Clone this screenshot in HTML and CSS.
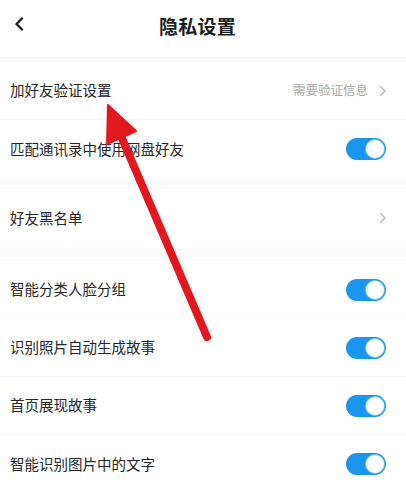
FILE: index.html
```html
<!DOCTYPE html>
<html lang="zh-CN">
<head>
<meta charset="utf-8">
<title>隐私设置</title>
<link rel="stylesheet" href="styles.css">
</head>
<body>
<div class="page">
  <header class="topbar">
    <span class="back">
      <svg width="12" height="14" viewBox="0 0 12 14"><path d="M9 1.5 L3.5 7 L9 12.5" fill="none" stroke="#222" stroke-width="2.4" stroke-linecap="round" stroke-linejoin="round"/></svg>
    </span>
    <h1 class="title">隐私设置</h1>
  </header>
  <div class="band band-top"></div>

  <section class="group">
    <div class="row">
      <span class="label">加好友验证设置</span>
      <span class="extra">需要验证信息<svg class="chev" width="8" height="12" viewBox="0 0 8 12"><path d="M1.5 1.5 L6 6 L1.5 10.5" fill="none" stroke="#b8b8b8" stroke-width="1.4" stroke-linecap="round" stroke-linejoin="round"/></svg></span>
    </div>
    <div class="row">
      <span class="label">匹配通讯录中使用网盘好友</span>
      <span class="toggle"><span class="thumb"></span></span>
    </div>
  </section>
  <div class="band band-mid"></div>

  <section class="group">
    <div class="row">
      <span class="label">好友黑名单</span>
      <span class="extra"><svg class="chev" width="8" height="12" viewBox="0 0 8 12"><path d="M1.5 1.5 L6 6 L1.5 10.5" fill="none" stroke="#b8b8b8" stroke-width="1.4" stroke-linecap="round" stroke-linejoin="round"/></svg></span>
    </div>
  </section>
  <div class="band band-low"></div>

  <section class="group">
    <div class="row">
      <span class="label">智能分类人脸分组</span>
      <span class="toggle"><span class="thumb"></span></span>
    </div>
    <div class="row">
      <span class="label">识别照片自动生成故事</span>
      <span class="toggle"><span class="thumb"></span></span>
    </div>
    <div class="row">
      <span class="label">首页展现故事</span>
      <span class="toggle"><span class="thumb"></span></span>
    </div>
    <div class="row">
      <span class="label">智能识别图片中的文字</span>
      <span class="toggle"><span class="thumb"></span></span>
    </div>
  </section>

  <svg class="arrow" width="406" height="498" viewBox="0 0 406 498">
    <line x1="207" y1="337" x2="121" y2="136" stroke="#e3171e" stroke-width="8" stroke-linecap="round"/>
    <polygon points="108,105 136,131 107,144" fill="#e3171e" stroke="#e3171e" stroke-width="2" stroke-linejoin="round"/>
  </svg>
</div>
</body>
</html>
```

FILE: styles.css
```css
* { box-sizing: border-box; }
html, body {
  margin: 0;
  padding: 0;
  background: #ffffff;
}
body {
  font-family: "Noto Sans CJK SC", "Noto Sans", sans-serif;
  color: #222222;
}
.page {
  position: relative;
  width: 406px;
  height: 498px;
  overflow: hidden;
  background: #ffffff;
}
.topbar {
  height: 57px;
  display: flex;
  align-items: center;
  justify-content: center;
  position: relative;
  padding-right: 11px;
}
.back {
  position: absolute;
  left: 13px;
  top: 17px;
  display: flex;
}
.title {
  margin: 0;
  font-size: 19px;
  font-weight: 700;
  color: #1e1e1e;
  letter-spacing: 0.3px;
  line-height: 1;
  margin-top: -6px;
}
.band {
  background: #fbfbfb;
}
.band-top { height: 5px; }
.band-mid { height: 11px; }
.band-low { height: 14px; }
.group {
  display: flex;
  flex-direction: column;
}
.row {
  height: 58px;
  display: flex;
  align-items: center;
  justify-content: space-between;
  padding: 0 20px 0 10px;
  border-bottom: 1px solid #f8f8f8;
}
.group .row:last-child {
  border-bottom: none;
}
.label {
  font-size: 14.5px;
  color: #262626;
  line-height: 1;
}
.extra {
  display: flex;
  align-items: center;
  gap: 11px;
  font-size: 12.5px;
  color: #a9a9a9;
  line-height: 1;
}
.chev {
  display: block;
  margin-right: -1px;
}
.toggle {
  width: 40px;
  height: 22px;
  border-radius: 11px;
  background: #1a96ee;
  position: relative;
  display: block;
}
.thumb {
  position: absolute;
  right: 2px;
  top: 2px;
  width: 18px;
  height: 18px;
  border-radius: 50%;
  background: #ffffff;
  box-shadow: 0 0 0 1px #7cc3f2;
}
.arrow {
  position: absolute;
  left: 0;
  top: 0;
  pointer-events: none;
}
```
